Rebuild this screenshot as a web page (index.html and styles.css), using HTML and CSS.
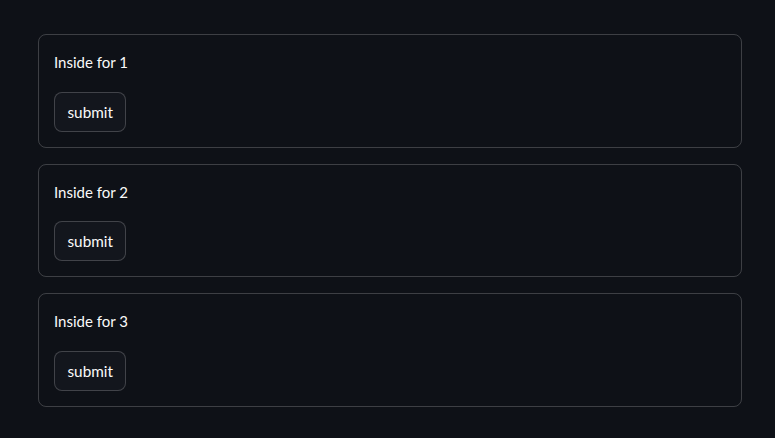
FILE: index.html
```html
<!DOCTYPE html>
<html lang="en">
<head>
<meta charset="utf-8">
<link rel="stylesheet" href="styles.css">
</head>
<body>
<main class="page">
  <form class="form">
    <p class="label">Inside for 1</p>
    <button type="button" class="btn">submit</button>
  </form>
  <form class="form">
    <p class="label">Inside for 2</p>
    <button type="button" class="btn">submit</button>
  </form>
  <form class="form">
    <p class="label">Inside for 3</p>
    <button type="button" class="btn">submit</button>
  </form>
</main>
</body>
</html>
```
FILE: styles.css
```css
html, body {
  margin: 0;
  padding: 0;
  background: #0e1117;
  color: #fafafa;
  font-family: Lato, "Open Sans", sans-serif;
  font-size: 15px;
}
.page {
  padding: 34px 33px 0 38px;
  display: flex;
  flex-direction: column;
  gap: 16px;
}
.form {
  margin: 0;
  width: 704px;
  box-sizing: border-box;
  border: 1px solid rgba(250, 250, 250, 0.2);
  border-radius: 8px;
  padding: 15px;
  display: flex;
  flex-direction: column;
  align-items: flex-start;
  gap: 16px;
}
.label {
  margin: 0;
  line-height: 25.6px;
  font-size: 15px;
}
.btn {
  box-sizing: border-box;
  height: 40px;
  padding: 0 12.5px;
  background: #13161d;
  color: #fafafa;
  border: 1px solid rgba(250, 250, 250, 0.2);
  border-radius: 8px;
  font-family: inherit;
  font-size: 15.3px;
}
```
